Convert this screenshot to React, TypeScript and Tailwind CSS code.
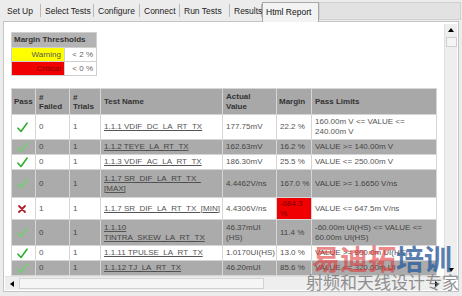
import React from "react";

const tabs = [
  { label: "Set Up", w: "w-[38px]" },
  { label: "Select Tests", w: "w-[53px]" },
  { label: "Configure", w: "w-[46px]" },
  { label: "Connect", w: "w-[40px]" },
  { label: "Run Tests", w: "w-[50px]" },
  { label: "Results", w: "w-[32px]" },
];

const Check = ({ light }: { light: boolean }) => (
  <svg width="11" height="11" viewBox="0 0 11 11">
    <path
      d="M1 6.2 L4 9.5 L10 1.2"
      fill="none"
      stroke={light ? "#6fd06f" : "#2fae2f"}
      strokeWidth="1.6"
      strokeLinecap="round"
      strokeLinejoin="round"
    />
  </svg>
);

const Cross = () => (
  <svg width="10" height="10" viewBox="0 0 10 10">
    <path d="M2 2 L8 8 M8 2 L2 8" stroke="#b3202a" strokeWidth="1.8" strokeLinecap="round" />
  </svg>
);

type Row = {
  pass: boolean;
  failed: string;
  name: React.ReactNode;
  actual: React.ReactNode;
  margin: React.ReactNode;
  limits: React.ReactNode;
  gray: boolean;
  h: string;
  bad?: boolean;
};

const rows: Row[] = [
  {
    pass: true, failed: "0", gray: false, h: "h-[24px]",
    name: "1.1.1 VDIF_DC_LA_RT_TX", actual: "177.75mV", margin: "22.2 %",
    limits: <>160.00m V &lt;= VALUE &lt;=<br />240.00m V</>,
  },
  {
    pass: true, failed: "0", gray: true, h: "h-[14px]",
    name: "1.1.2 TEYE_LA_RT_TX", actual: "162.63mV", margin: "16.2 %",
    limits: "VALUE >= 140.00m V",
  },
  {
    pass: true, failed: "0", gray: false, h: "h-[14px]",
    name: "1.1.3 VDIF_AC_LA_RT_TX", actual: "186.30mV", margin: "25.5 %",
    limits: "VALUE <= 250.00m V",
  },
  {
    pass: true, failed: "0", gray: true, h: "h-[27px]",
    name: <>1.1.7 SR_DIF_LA_RT_TX_<br />[MAX]</>, actual: "4.4462V/ns", margin: "167.0 %",
    limits: "VALUE >= 1.6650 V/ns",
  },
  {
    pass: false, failed: "1", gray: false, h: "h-[21px]", bad: true,
    name: "1.1.7 SR_DIF_LA_RT_TX_[MIN]", actual: "4.4306V/ns", margin: <>-684.3<br />%</>,
    limits: "VALUE <= 647.5m V/ns",
  },
  {
    pass: true, failed: "0", gray: true, h: "h-[25px]",
    name: <>1.1.10<br />TINTRA_SKEW_LA_RT_TX</>, actual: <>46.37mUI<br />(HS)</>, margin: "11.4 %",
    limits: <>-60.00m UI(HS) &lt;= VALUE &lt;=<br />60.00m UI(HS)</>,
  },
  {
    pass: true, failed: "0", gray: false, h: "h-[14px]",
    name: "1.1.11 TPULSE_LA_RT_TX", actual: "1.0170UI(HS)", margin: "13.0 %",
    limits: "VALUE >= 800.0m UI(HS)",
  },
  {
    pass: true, failed: "0", gray: true, h: "h-[14px]",
    name: "1.1.12 TJ_LA_RT_TX", actual: "46.20mUI", margin: "85.6 %",
    limits: "VALUE <= 320.00m UI",
  },
];

export default function App() {
  return (
    <div className="relative w-[462px] h-[296px] overflow-hidden bg-[#ececec] font-['Liberation_Sans',Arial,sans-serif] text-[#333]">
      {/* TAB STRIP */}
      <div className="flex h-[21px] pl-[3px] text-[8.5px] text-[#222]">
        {tabs.map((t) => (
          <div key={t.label} className={`${t.w} flex items-center pl-[4px] pt-[2px] border-r border-[#b8b8b8] my-[4px] whitespace-nowrap`}>
            {t.label}
          </div>
        ))}
        <div className="w-[57px] mt-[2px] flex items-center pl-[3px] bg-[#f3f3f3] border-x border-t border-[#a8a8a8] text-[#111] whitespace-nowrap relative z-10 -mb-px">
          Html Report
        </div>
        <div className="flex-1 mt-[2px] mb-[1px] mr-[1px] bg-[#e2e2e2] border border-[#d0d0d0]" />
      </div>

      {/* PANEL */}
      <div className="ml-[3px] w-[456px] h-[271px] border border-[#c4c4c4] bg-white flex flex-col">
        <div className="flex h-[254px]">
          <div className="flex-1 overflow-hidden pl-[8px] pt-[10px]">
            {/* margin thresholds */}
            <table className="border-separate border-spacing-[1px] bg-[#cfcfcf] text-[8px] w-[86px] -ml-px">
              <tbody>
                <tr className="h-[14px]">
                  <td colSpan={2} className="bg-[#b3b3b3] font-bold px-[2px] text-[#333] whitespace-nowrap">Margin Thresholds</td>
                </tr>
                <tr className="h-[13px]">
                  <td className="w-[52px] bg-[#ffff00] text-right pr-[3px] text-[#555]">Warning</td>
                  <td className="bg-white text-right pr-[3px] text-[#666]">&lt; 2 %</td>
                </tr>
                <tr className="h-[13px]">
                  <td className="bg-[#f00000] text-right pr-[3px] text-[#8a0000]">Critical</td>
                  <td className="bg-white text-right pr-[3px] text-[#666]">&lt; 0 %</td>
                </tr>
              </tbody>
            </table>

            {/* results */}
            <table className="mt-[12px] -ml-px table-fixed border-separate border-spacing-[1px] bg-[#d6d6d6] text-[8px] leading-[10px] w-[426px]">
              <colgroup>
                <col className="w-[23px]" />
                <col className="w-[33px]" />
                <col className="w-[30px]" />
                <col className="w-[121px]" />
                <col className="w-[53px]" />
                <col className="w-[34px]" />
                <col />
              </colgroup>
              <thead>
                <tr className="h-[25px] bg-[#a8a8a8] font-bold text-[#333] text-left">
                  <th className="px-[2px]">Pass</th>
                  <th className="px-[3px] leading-[9px]">#<br />Failed</th>
                  <th className="px-[3px] leading-[9px]">#<br />Trials</th>
                  <th className="px-[3px]">Test Name</th>
                  <th className="px-[3px]">Actual<br />Value</th>
                  <th className="px-[2px]">Margin</th>
                  <th className="px-[3px]">Pass Limits</th>
                </tr>
              </thead>
              <tbody>
                {rows.map((r, i) => (
                  <tr key={i} className={`${r.h} ${r.gray ? "bg-[#ababab] text-[#444]" : "bg-white text-[#555]"}`}>
                    <td className="pl-[5px]">{r.pass ? <Check light={r.gray} /> : <Cross />}</td>
                    <td className="px-[3px]">{r.failed}</td>
                    <td className="px-[3px]">{r.failed === "1" ? "1" : "1"}</td>
                    <td className="px-[3px] whitespace-nowrap">
                      <span className="underline decoration-[#555]">{r.name}</span>
                    </td>
                    <td className="px-[3px] whitespace-nowrap">{r.actual}</td>
                    <td className={`px-[3px] whitespace-nowrap ${r.bad ? "bg-[#f00000] text-[#7a0000] align-top pt-[1px]" : ""}`}>{r.margin}</td>
                    <td className="px-[3px] whitespace-nowrap">{r.limits}</td>
                  </tr>
                ))}
              </tbody>
            </table>
          </div>

          {/* vertical scrollbar */}
          <div className="w-[13px] mt-[2px] mr-[1px] bg-[#eeeeee] border-l border-[#e0e0e0] flex flex-col items-center">
            <div className="h-[12px] w-full flex items-center justify-center">
              <div className="w-0 h-0 border-x-[3.5px] border-x-transparent border-b-[4px] border-b-black" />
            </div>
            <div className="h-[10px] w-[11px] mt-[1px] bg-[#f4f4f4] border border-[#cfcfcf]" />
            <div className="flex-1" />
            <div className="h-[12px] w-full flex items-center justify-center">
              <div className="w-0 h-0 border-x-[3.5px] border-x-transparent border-t-[4px] border-t-black" />
            </div>
          </div>
        </div>

        {/* horizontal scrollbar */}
        <div className="h-[14px] flex items-stretch bg-[#eeeeee] border-t border-[#e2e2e2] ml-px mr-[14px]">
          <div className="w-[14px] flex items-center justify-center">
            <div className="w-0 h-0 border-y-[3.5px] border-y-transparent border-r-[4px] border-r-black" />
          </div>
          <div className="w-[245px] my-[1px] bg-[#f5f5f5] border border-[#d2d2d2]" />
          <div className="flex-1" />
          <div className="w-[14px] flex items-center justify-center">
            <div className="w-0 h-0 border-y-[3.5px] border-y-transparent border-l-[4px] border-l-black" />
          </div>
        </div>
      </div>

      {/* watermark over the screenshot */}
      <div className="absolute left-[312px] top-[243px] flex text-[28px] leading-[30px] font-bold font-['Noto_Sans_CJK_SC',sans-serif] pointer-events-none">
        <span className="text-[#e03a3a] opacity-60">易迪拓</span>
        <span className="text-[#2f5f9e] opacity-80">培训</span>
      </div>
      <div className="absolute left-[306px] top-[272px] text-[17px] leading-[20px] text-[#777] opacity-80 font-['Noto_Sans_CJK_SC',sans-serif] pointer-events-none whitespace-nowrap">
        射频和天线设计专家
      </div>
    </div>
  );
}
